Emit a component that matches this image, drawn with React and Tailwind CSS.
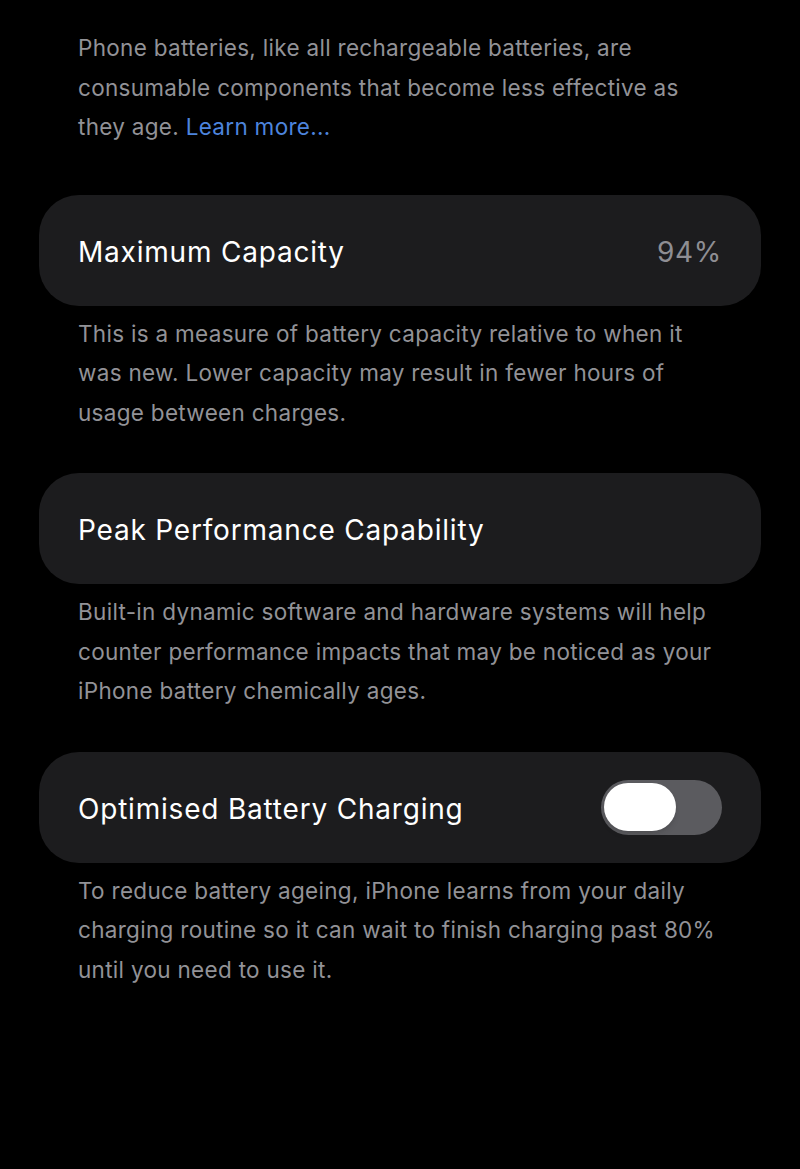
import { useState } from "react";

// Battery health settings (dark iOS look)
const SECTIONS = [
  {
    title: "Maximum Capacity",
    value: "94%",
    footer:
      "This is a measure of battery capacity relative to when it was new. Lower capacity may result in fewer hours of usage between charges.",
  },
  {
    title: "Peak Performance Capability",
    footer:
      "Built-in dynamic software and hardware systems will help counter performance impacts that may be noticed as your iPhone battery chemically ages.",
  },
  {
    title: "Optimised Battery Charging",
    toggle: true,
    footer:
      "To reduce battery ageing, iPhone learns from your daily charging routine so it can wait to finish charging past 80% until you need to use it.",
  },
];

function Toggle({ on, onChange }) {
  return (
    <button
      onClick={() => onChange(!on)}
      className="w-[121px] h-[55px] rounded-full bg-[#5b5b5f] p-[3px] flex items-center"
    >
      <span
        className={`block w-[72px] h-[48px] rounded-full bg-white shadow-md transition-transform ${
          on ? "translate-x-[43px]" : "translate-x-0"
        }`}
      />
    </button>
  );
}

export default function App() {
  const [optimised, setOptimised] = useState(false);

  return (
    <div
      className="min-h-[1169px] w-[800px] bg-black pt-[28px] px-[39px]"
      style={{ fontFamily: "Inter, 'Noto Sans', sans-serif" }}
    >
      <p className="px-[39px] text-[22.5px] leading-[39.5px] text-[#929297] tracking-[0.3px]">
        Phone batteries, like all rechargeable batteries, are consumable components that become less effective as
        they age. <span className="text-[#4d84dd]">Learn more...</span>
      </p>

      <div className="mt-[48px] flex flex-col gap-[41px]">
        {SECTIONS.map((s) => (
          <div key={s.title}>
            <div className="h-[111px] rounded-[40px] bg-[#1c1c1e] px-[39px] flex items-center justify-between">
              <span className="text-[28px] text-white tracking-[0.8px] pt-[3px]">{s.title}</span>
              {s.value && (
                <span className="text-[28px] text-[#8e8e93] tracking-[0.7px] pt-[3px]">{s.value}</span>
              )}
              {s.toggle && <Toggle on={optimised} onChange={setOptimised} />}
            </div>
            <p className="mt-[8px] px-[39px] text-[22.5px] leading-[39.5px] text-[#929297] tracking-[0.3px]">
              {s.footer}
            </p>
          </div>
        ))}
      </div>
    </div>
  );
}
